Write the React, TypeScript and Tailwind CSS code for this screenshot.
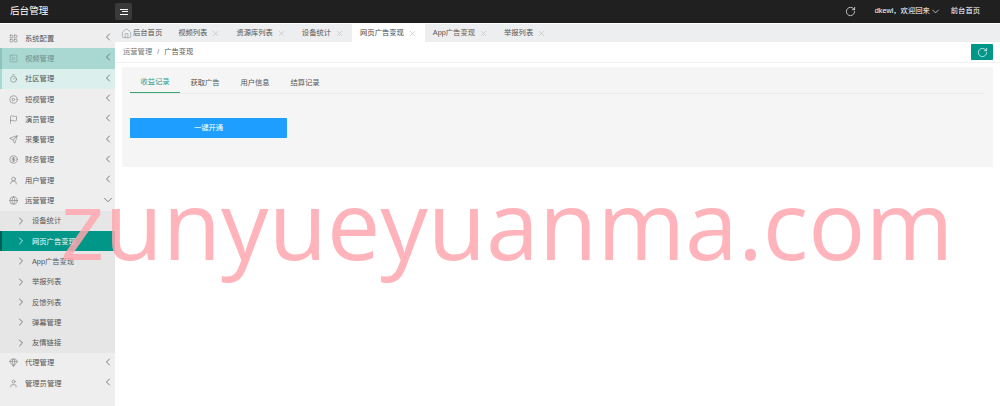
import { ChevronLeft, ChevronDown, ChevronRight, RotateCw, X, House, LayoutGrid, SquarePlay, Timer, CirclePlay, Flag, Send, CircleDollarSign, UserRound, Globe, Gem, User } from 'lucide-react'

const cjk = '"Liberation Sans", "Noto Sans CJK SC", sans-serif'

interface MenuItem {
  title: string
  icon: React.ElementType
  tone?: string
}

const topMenu: MenuItem[] = [
  { title: '系统配置', icon: LayoutGrid },
  { title: '视频管理', icon: SquarePlay, tone: 'bg-[#a9d8d2] border-l-2 border-[#8cc4bd] pl-[7px] text-[#6f8f8b]' },
  { title: '社区管理', icon: Timer, tone: 'bg-[#dbefec] border-l-2 border-[#a9d8d2] pl-[7px] text-[#555]' },
  { title: '短视管理', icon: CirclePlay },
  { title: '演员管理', icon: Flag },
  { title: '采集管理', icon: Send },
  { title: '财务管理', icon: CircleDollarSign },
  { title: '用户管理', icon: UserRound },
]

const subMenu = ['设备统计', '网页广告变现', 'App广告变现', '举报列表', '反馈列表', '弹幕管理', '友情链接']

const bottomMenu: MenuItem[] = [
  { title: '代理管理', icon: Gem },
  { title: '管理员管理', icon: User },
]

const tabs = ['视频列表', '资源库列表', '设备统计', '网页广告变现', 'App广告变现', '举报列表']

function MenuRow({ item }: { item: MenuItem }) {
  const Icon = item.icon
  return (
    <div className={`flex h-[20.3px] items-center pr-[1px] ${item.tone ?? 'pl-[9px] text-[#555]'}`}>
      <Icon className="h-[9px] w-[9px] shrink-0 opacity-80" strokeWidth={1.5} />
      <span className="ml-[7px] flex-1 translate-y-[0.5px] text-[7.3px]">{item.title}</span>
      <ChevronLeft className="h-[12px] w-[12px] -translate-y-[1px] text-[#555]" strokeWidth={1.5} />
    </div>
  )
}

export default function App() {
  return (
    <div className="relative h-[406px] w-[1000px] overflow-hidden bg-white" style={{ fontFamily: cjk }}>
      <header className="flex h-[23px] items-center bg-[#202020] text-white">
        <div className="w-[115px] pl-[10px] text-[9.6px]">后台管理</div>
        <button className="flex h-[17px] w-[17px] items-center justify-center rounded-[2px] bg-[#3a3a3a]">
          <span className="flex flex-col items-end gap-[1.5px]">
            <span className="h-px w-[8px] bg-white" />
            <span className="h-px w-[6px] bg-white" />
            <span className="h-px w-[8px] bg-white" />
          </span>
        </button>
        <div className="ml-auto flex items-center pr-[20px] text-[7.3px]">
          <RotateCw className="mr-[19px] h-[11px] w-[11px]" strokeWidth={1.5} />
          <span>dkewl，欢迎回来</span>
          <ChevronDown className="h-[11px] w-[11px]" strokeWidth={1.5} />
          <span className="ml-[10px]">前台首页</span>
        </div>
      </header>

      <div className="mt-px flex h-[382px]">
        <aside className="flex w-[115px] shrink-0 flex-col bg-[#eeeeee] pt-[4px]">
          {topMenu.map((item) => (
            <MenuRow key={item.title} item={item} />
          ))}
          <div className="flex h-[20.3px] items-center pl-[9px] text-[#555]">
            <Globe className="h-[9px] w-[9px] shrink-0 opacity-80" strokeWidth={1.5} />
            <span className="ml-[7px] flex-1 translate-y-[0.5px] text-[7.3px]">运营管理</span>
            <ChevronDown className="h-[14px] w-[14px] -translate-y-[1px] text-[#555]" strokeWidth={1.2} />
          </div>
          <div className="bg-[#e6e6e6]">
            {subMenu.map((title) => (
              <div
                key={title}
                className={
                  title === '网页广告变现'
                    ? 'flex h-[20.3px] items-center border-l-2 border-[#005e52] bg-[#009688] pl-[13px] text-white'
                    : 'flex h-[20.3px] items-center pl-[15px] text-[#555]'
                }
              >
                <ChevronRight className="h-[12px] w-[12px] shrink-0" strokeWidth={1.5} />
                <span className="ml-[5px] translate-y-[0.5px] text-[7.3px]">{title}</span>
              </div>
            ))}
          </div>
          {bottomMenu.map((item) => (
            <MenuRow key={item.title} item={item} />
          ))}
        </aside>

        <main className="flex min-w-0 flex-1 flex-col">
          <nav className="flex h-[18px] items-center bg-[#edeef0] text-[7.3px] text-[#555]">
            <div className="flex h-full items-center pl-[6px] pr-[8px]">
              <House className="mr-[1px] h-[11px] w-[11px] text-[#777]" strokeWidth={1} />
              后台首页
            </div>
            {tabs.map((tab) => (
              <div
                key={tab}
                className={
                  tab === '网页广告变现'
                    ? 'flex h-full items-center bg-white px-[8px] text-[#444]'
                    : 'flex h-full items-center px-[8px]'
                }
              >
                {tab}
                <X className="ml-[4px] h-[9px] w-[9px] text-[#aaa]" strokeWidth={1.2} />
              </div>
            ))}
          </nav>
          <div className="flex h-[21px] items-center justify-between border-b border-[#f2f2f2] pl-[8px] pr-[7px] text-[7.3px] text-[#777]">
            <div>
              运营管理<span className="mx-[5px]">/</span><span className="text-[#555]">广告变现</span>
            </div>
            <button className="flex h-[16px] w-[22px] items-center justify-center rounded-[1px] bg-[#009688] text-white">
              <RotateCw className="h-[11px] w-[11px]" strokeWidth={1.5} />
            </button>
          </div>
          <section className="mx-[7px] mt-[4px] h-[100px] bg-[#f5f5f5] px-[8px]">
            <div className="flex h-[27px] items-stretch border-b border-[#ebebeb] pt-[6px] text-[7.3px] text-[#555]">
              <div className="flex w-[50px] items-center justify-center border-b border-[#3aa76d] text-[#2a9d8f]">收益记录</div>
              <div className="flex w-[50px] items-center justify-center">获取广告</div>
              <div className="flex w-[50px] items-center justify-center">用户信息</div>
              <div className="flex w-[50px] items-center justify-center">结算记录</div>
            </div>
            <button className="mt-[24px] flex h-[20px] w-[157px] items-center justify-center rounded-[1px] bg-[#1e9fff] text-[7.3px] text-white">
              一键开通
            </button>
          </section>
        </main>
      </div>

      <div
        className="pointer-events-none absolute left-[60px] top-[157px] whitespace-nowrap text-[95px] leading-[132px] text-[#ffa6ae]/85"
        style={{ fontFamily: '"Open Sans", sans-serif' }}
      >
        zunyueyuanma.com
      </div>
    </div>
  )
}
